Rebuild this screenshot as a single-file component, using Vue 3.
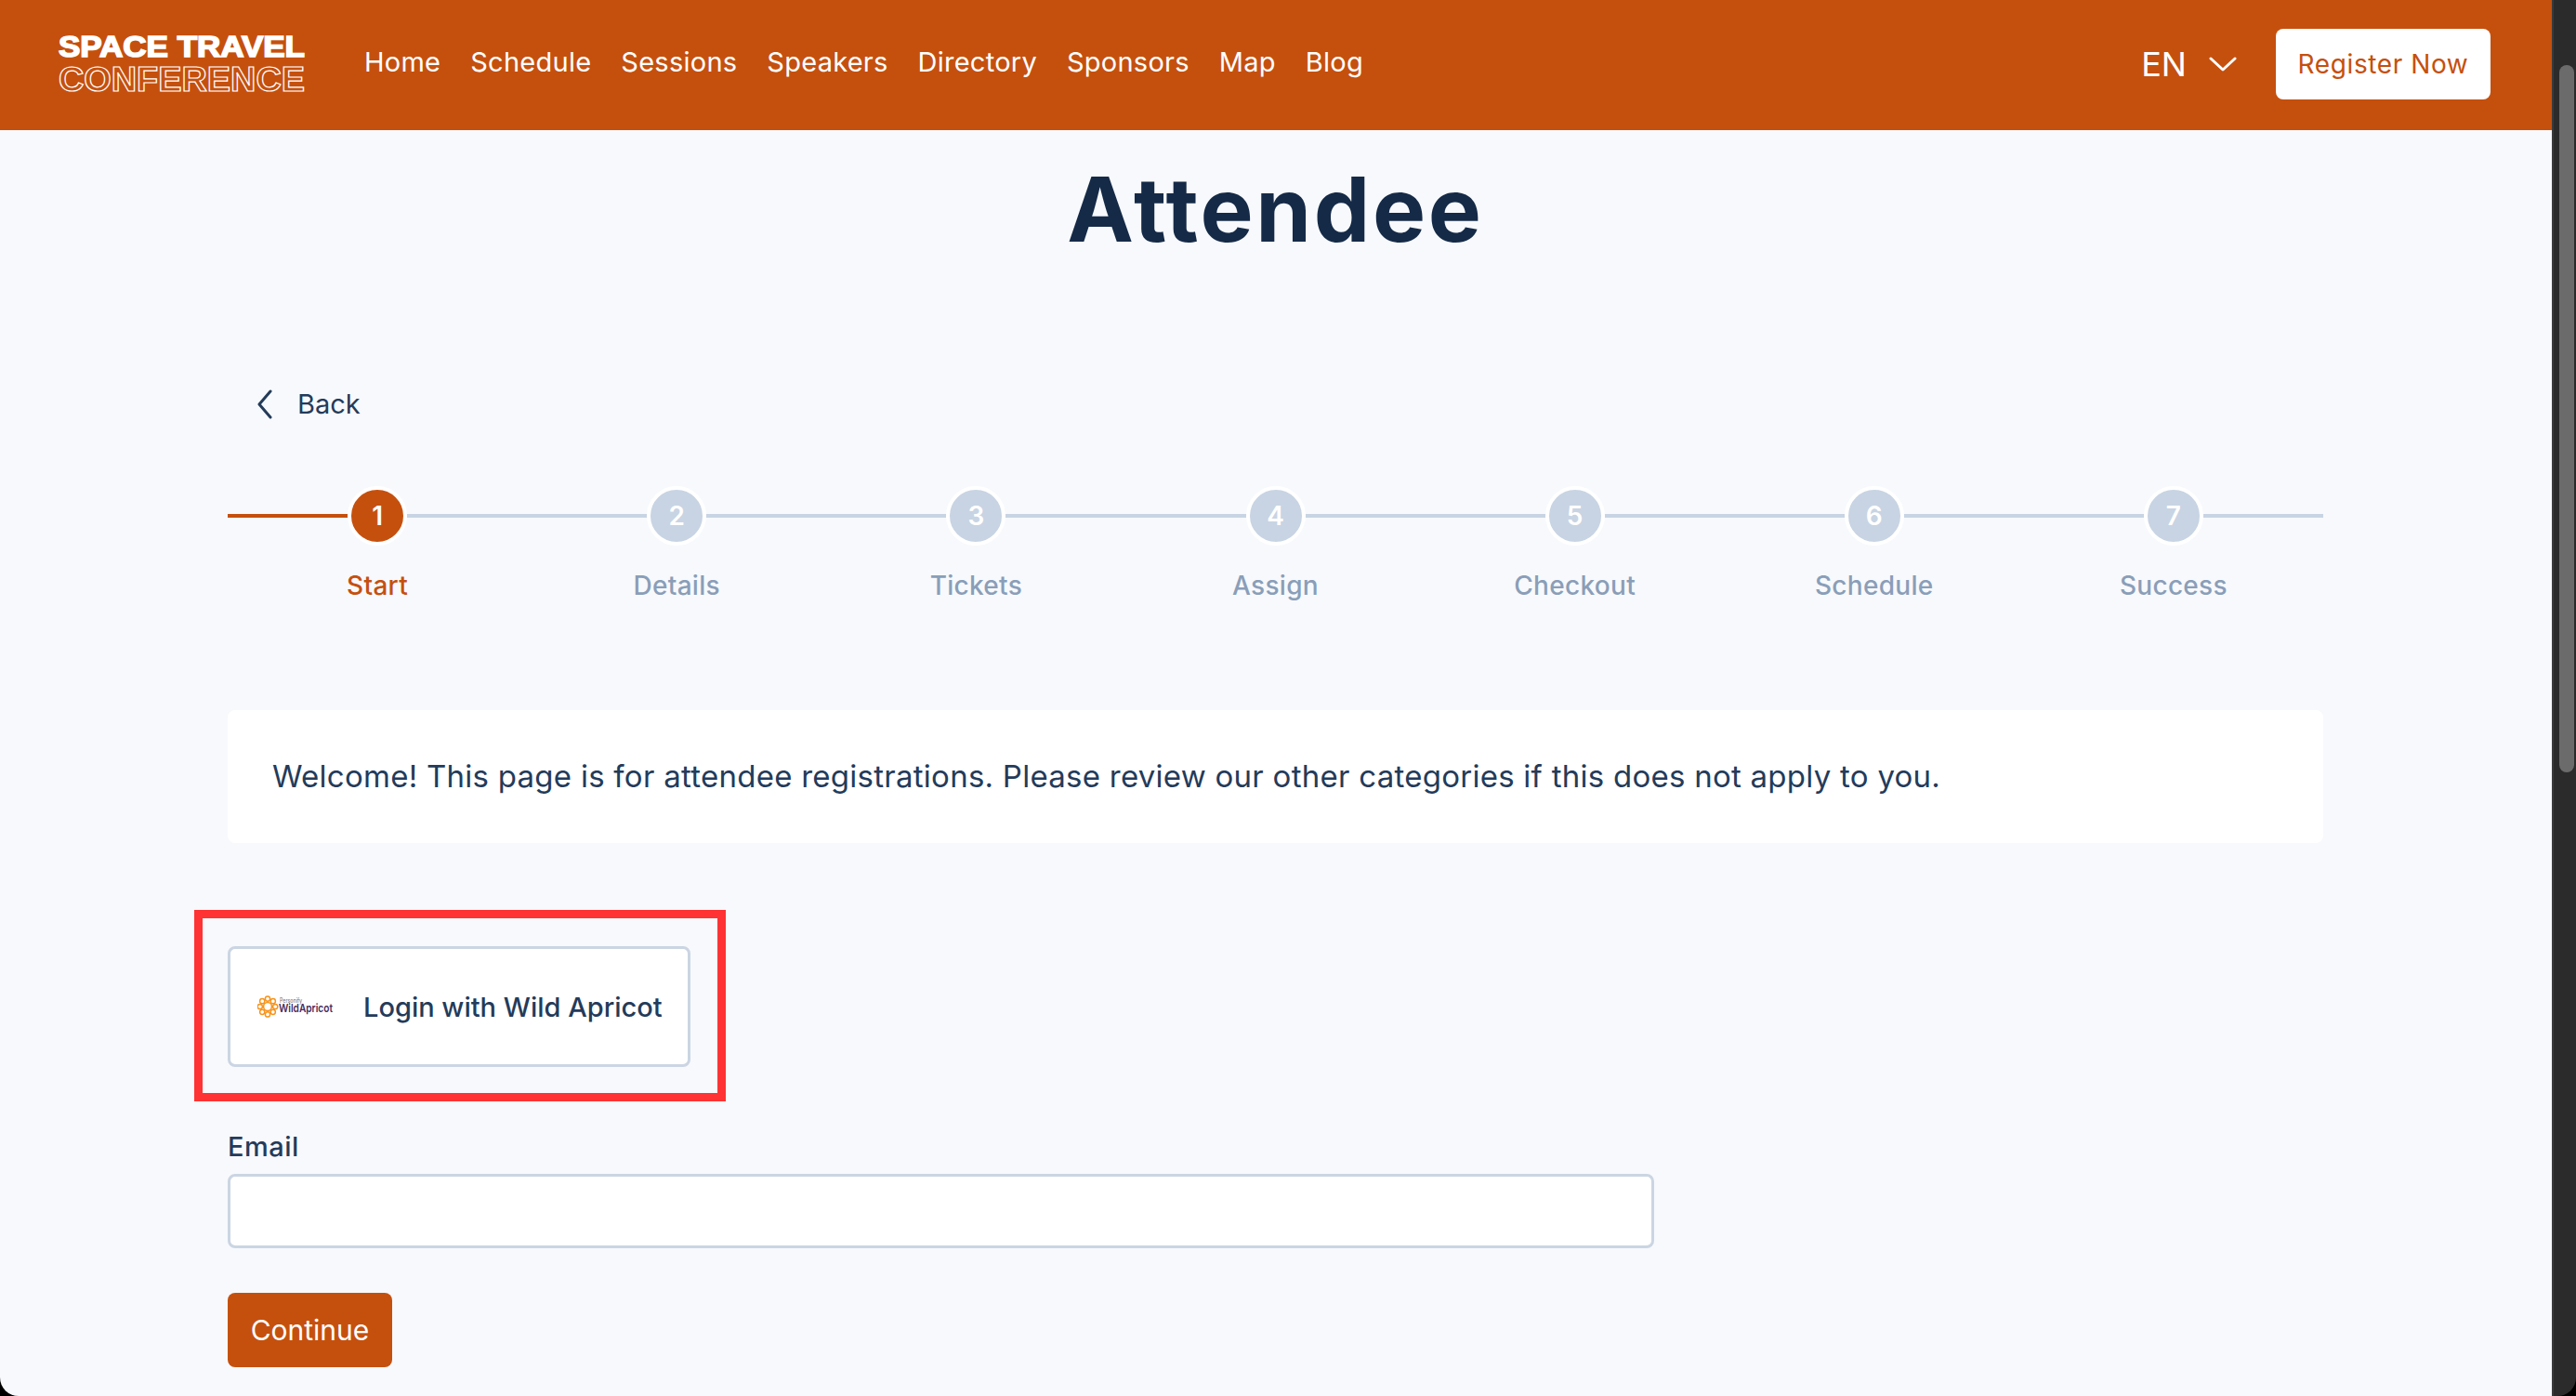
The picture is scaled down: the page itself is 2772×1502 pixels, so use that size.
<template>
  <div class="window">
    <div class="page">
      <header class="topbar">
        <div class="topbar__left">
          <svg class="logo" width="268" height="62" viewBox="0 0 268 62">
            <text class="logo__top" x="1" y="22" textLength="265" lengthAdjust="spacingAndGlyphs">SPACE TRAVEL</text>
            <text class="logo__bottom" x="1" y="59" textLength="265" lengthAdjust="spacingAndGlyphs">CONFERENCE</text>
          </svg>
          <nav class="topbar__nav">
            <a v-for="item in navItems" :key="item" class="topbar__link">{{ item }}</a>
          </nav>
        </div>
        <div class="topbar__right">
          <span class="lang">EN</span>
          <svg class="lang__icon" width="30" height="18" viewBox="0 0 30 18">
            <path d="M2 3l13 12L28 3" fill="none" stroke="#fff" stroke-width="3" stroke-linecap="round" stroke-linejoin="round" />
          </svg>
          <button class="btn btn--white">Register Now</button>
        </div>
      </header>

      <main class="content">
        <h1 class="title">Attendee</h1>

        <div class="back">
          <svg width="18" height="32" viewBox="0 0 18 32">
            <path d="M15 2L3 16l12 14" fill="none" stroke="#243b5a" stroke-width="3" stroke-linecap="round" stroke-linejoin="round" />
          </svg>
          <span>Back</span>
        </div>

        <ol class="steps">
          <li
            v-for="(step, i) in steps"
            :key="step"
            class="step"
            :class="{ 'step--active': i === 0 }"
          >
            <div class="step__track">
              <span class="step__line step__line--before"></span>
              <span class="step__dot">{{ i + 1 }}</span>
              <span class="step__line"></span>
            </div>
            <span class="step__label">{{ step }}</span>
          </li>
        </ol>

        <div class="notice">
          Welcome! This page is for attendee registrations. Please review our other categories if this does not apply to you.
        </div>

        <div class="sso">
          <button class="sso__btn">
            <svg class="wa" width="82" height="26" viewBox="0 0 82 26">
              <g fill="none" stroke="#f7941d" stroke-width="1.5">
                <circle cx="11" cy="13" r="4.4" />
                <circle cx="11" cy="4.6" r="2.6" />
                <circle cx="11" cy="21.4" r="2.6" />
                <circle cx="2.8" cy="13" r="2.6" />
                <circle cx="19.2" cy="13" r="2.6" />
                <circle cx="5.2" cy="7.2" r="2.6" />
                <circle cx="16.8" cy="7.2" r="2.6" />
                <circle cx="5.2" cy="18.8" r="2.6" />
                <circle cx="16.8" cy="18.8" r="2.6" />
              </g>
              <text class="wa__small" x="24" y="9" textLength="24" lengthAdjust="spacingAndGlyphs">Personify</text>
              <text class="wa__name" x="23" y="19" textLength="58" lengthAdjust="spacingAndGlyphs">WildApricot</text>
            </svg>
            <span class="sso__text">Login with Wild Apricot</span>
          </button>
          <div class="sso__mark"></div>
        </div>

        <label class="field">
          <span class="field__label">Email</span>
          <input class="field__input" type="text" />
        </label>

        <button class="btn btn--primary">Continue</button>
      </main>
    </div>

    <aside class="scrollbar">
      <div class="scrollbar__thumb"></div>
    </aside>
  </div>
</template>

<script setup>
const navItems = ['Home', 'Schedule', 'Sessions', 'Speakers', 'Directory', 'Sponsors', 'Map', 'Blog']
const steps = ['Start', 'Details', 'Tickets', 'Assign', 'Checkout', 'Schedule', 'Success']
</script>

<style>
html,
body {
  margin: 0;
  background: #000;
}
</style>

<style scoped>
.window {
  display: flex;
  height: 1502px;
  overflow: hidden;
  border-radius: 0 0 20px 20px;
  font-family: Inter, 'Liberation Sans', sans-serif;
  color: #243b5a;
}
.page {
  flex: 1;
  min-width: 0;
  background: #f7f9fc;
}
.scrollbar {
  width: 26px;
  box-sizing: border-box;
  padding: 70px 2px 0 6px;
  background: #2b2b2b;
  border-left: 2px solid #3a3a3a;
}
.scrollbar__thumb {
  height: 761px;
  border-radius: 8px;
  background: #6b6b6b;
}

.topbar {
  display: flex;
  align-items: center;
  justify-content: space-between;
  height: 140px;
  padding: 0 66px 0 62px;
  background: #c5500e;
}
.topbar__left {
  display: flex;
  align-items: center;
  gap: 62px;
}
.logo {
  display: block;
  overflow: visible;
}
.logo__top {
  font-family: 'Liberation Sans', sans-serif;
  font-size: 31px;
  font-weight: 700;
  fill: #fff;
  stroke: #fff;
  stroke-width: 1.6px;
}
.logo__bottom {
  font-family: 'Liberation Sans', sans-serif;
  font-size: 36px;
  font-weight: 700;
  fill: none;
  stroke: #fff;
  stroke-width: 1.2px;
}
.topbar__nav {
  display: flex;
  gap: 32px;
  margin-top: -8px;
}
.topbar__link {
  font-size: 29px;
  letter-spacing: 0.25px;
  color: #fff;
}
.topbar__right {
  display: flex;
  align-items: center;
  margin-top: -2px;
}
.lang {
  font-size: 36px;
  color: #fff;
}
.lang__icon {
  margin: 0 42px 0 24px;
}

.btn {
  border: 0;
  border-radius: 8px;
  font-family: inherit;
  font-size: 28px;
}
.btn--white {
  width: 231px;
  height: 76px;
  background: #fff;
  color: #c5500e;
  letter-spacing: 0.6px;
}
.btn--primary {
  display: block;
  width: 177px;
  height: 80px;
  background: #c5500e;
  color: #fff;
  font-size: 30px;
}

.content {
  padding: 30px 246px 0 245px;
}
.title {
  margin: 0;
  font-size: 96px;
  line-height: 110px;
  font-weight: 700;
  letter-spacing: 2.7px;
  text-align: center;
  color: #152a47;
}

.back {
  display: flex;
  align-items: center;
  gap: 26px;
  margin: 135px 0 0 31px;
  font-size: 29px;
  line-height: 40px;
}

.steps {
  display: grid;
  grid-template-columns: repeat(7, 1fr);
  margin: 68px 0 0;
  padding: 0;
  list-style: none;
}
.step {
  display: flex;
  flex-direction: column;
  align-items: center;
}
.step__track {
  display: flex;
  align-items: center;
  align-self: stretch;
}
.step__line {
  flex: 1;
  height: 4px;
  background: #c8d4e3;
}
.step__dot {
  display: flex;
  align-items: center;
  justify-content: center;
  box-sizing: border-box;
  width: 64px;
  height: 64px;
  border: 4px solid #fff;
  border-radius: 50%;
  background: #c8d4e3;
  color: #fff;
  font-size: 28px;
  font-weight: 600;
}
.step__label {
  margin-top: 23px;
  font-size: 28px;
  line-height: 40px;
  font-weight: 500;
  letter-spacing: 0.3px;
  color: #8a9eb8;
}
.step--active .step__line--before {
  background: #c5500e;
}
.step--active .step__dot {
  background: #c5500e;
}
.step--active .step__label {
  color: #c5500e;
}

.notice {
  margin-top: 114px;
  padding: 48px;
  line-height: 47px;
  border-radius: 8px;
  background: #fff;
  font-size: 33px;
  letter-spacing: 0.26px;
}

.sso {
  position: relative;
  width: 498px;
  margin-top: 111px;
}
.sso__btn {
  display: flex;
  align-items: center;
  gap: 32px;
  box-sizing: border-box;
  width: 498px;
  height: 130px;
  padding: 0 29px;
  border: 3px solid #cbd5e3;
  border-radius: 8px;
  background: #fff;
  font-family: inherit;
  font-size: 29px;
  font-weight: 500;
  color: #243b5a;
}
.sso__text {
  white-space: nowrap;
}
.sso__mark {
  position: absolute;
  inset: -39px -38px -37px -36px;
  border: 9px solid #ff3333;
  pointer-events: none;
}
.wa {
  flex: none;
}
.wa__small {
  font-size: 7px;
  fill: #8b7f8c;
}
.wa__name {
  font-size: 12px;
  font-weight: 600;
  fill: #4a2a5c;
}

.field {
  display: block;
  width: 1535px;
  margin-top: 66px;
}
.field__label {
  display: block;
  font-size: 29px;
  font-weight: 500;
  letter-spacing: 0.5px;
  line-height: 40px;
}
.field__input {
  display: block;
  box-sizing: border-box;
  width: 100%;
  height: 80px;
  margin-top: 9px;
  border: 3px solid #cbd5e3;
  border-radius: 8px;
  background: #fff;
}
.field + .btn {
  margin-top: 48px;
}
</style>
